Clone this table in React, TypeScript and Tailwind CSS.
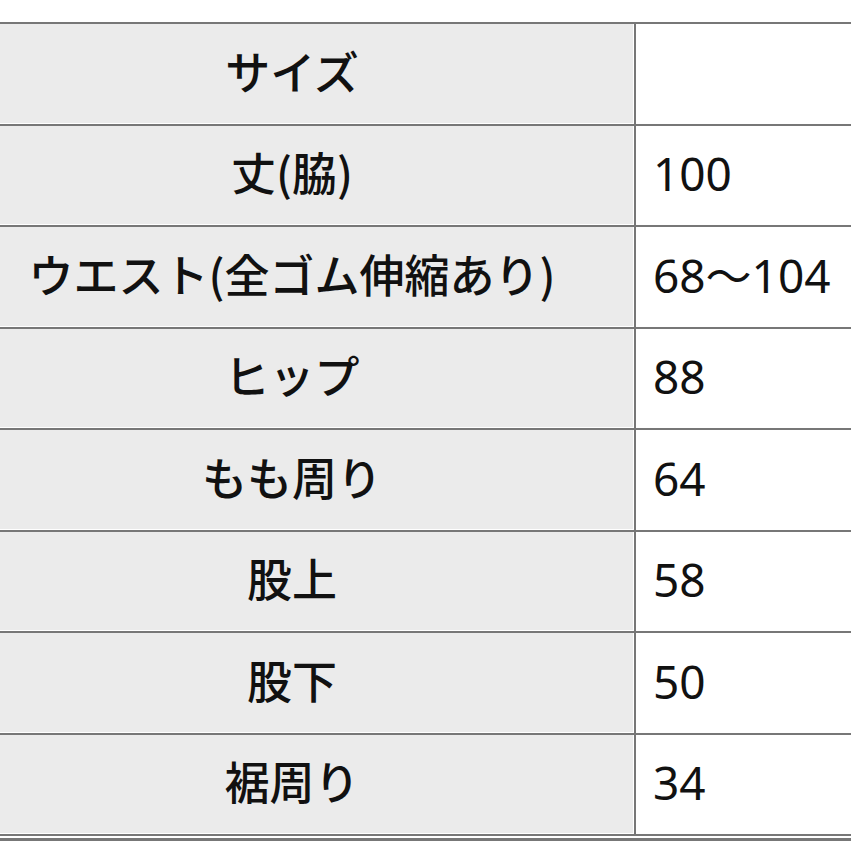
import * as React from "react";

const rows: { label: string; value: string }[] = [
    { label: "サイズ", value: "" },
    { label: "丈(脇)", value: "100" },
    { label: "ウエスト(全ゴム伸縮あり)", value: "68～104" },
    { label: "ヒップ", value: "88" },
    { label: "もも周り", value: "64" },
    { label: "股上", value: "58" },
    { label: "股下", value: "50" },
    { label: "裾周り", value: "34" },
];

export default function App() {
    return (
        <div className="w-[851px] h-[851px] bg-white pt-[22px] overflow-hidden">
            {rows.map((row) => (
                <div key={row.label} className="flex h-[101.5px] border-t-2 border-[#777777]">
                    <div className="w-[633px] shrink-0 mb-px mr-px bg-[#ebebeb] flex items-center justify-center pr-[49px] pb-[6px]">
                        <span className="text-[45px] leading-none font-medium text-[#111111] whitespace-nowrap [font-family:'Noto_Sans_CJK_JP',sans-serif]">
                            {row.label}
                        </span>
                    </div>
                    <div className="flex-1 border-l-2 border-[#777777] flex items-center pl-[17px] pb-[4px]">
                        <span className="text-[46px] leading-none text-[#111111] whitespace-nowrap [font-family:'Noto_Sans','Noto_Sans_CJK_JP',sans-serif]">
                            {row.value}
                        </span>
                    </div>
                </div>
            ))}
            <div className="border-t-2 border-[#777777] h-[4px]" />
            <div className="border-t-[3px] border-[#777777]" />
        </div>
    );
}
